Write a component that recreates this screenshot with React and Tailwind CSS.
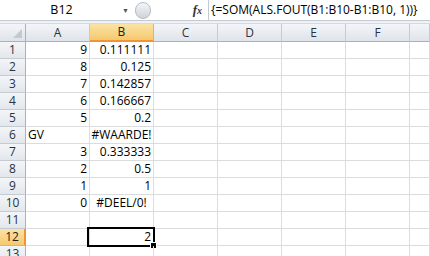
import React from "react";

const cols = ["A", "B", "C", "D", "E", "F", ""];

// row data: [A, B, aAlign, bAlign]
const rows = [
  ["9", "0.111111"],
  ["8", "0.125"],
  ["7", "0.142857"],
  ["6", "0.166667"],
  ["5", "0.2"],
  ["GV", "#WAARDE!", "left", "center"],
  ["3", "0.333333"],
  ["2", "0.5"],
  ["1", "1"],
  ["0", "#DEEL/0!", "right", "center"],
  ["", ""],
  ["", "2"],
  ["", ""],
];

const alignCls = {
  left: "justify-start pl-[2px]",
  right: "justify-end pr-[2px]",
  center: "justify-center",
};

function FormulaBar() {
  return (
    <div className="flex h-[21px] bg-white border-b border-[#c3c9d1]">
      <div className="relative flex w-[133px] items-center justify-center">
        <span className="mr-[10px] text-[12.5px] text-black">B12</span>
        <span className="absolute right-[4px] top-[7px] text-[7px] leading-none text-[#555]">▼</span>
      </div>
      <div className="flex w-[75px] items-center">
        <div className="ml-[2px] h-[17px] w-[16px] rounded-full border border-[#b6bcc4] bg-gradient-to-b from-[#f4f5f7] to-[#cfd4da]" />
        <span
          className="ml-auto mr-[6px] text-[13px] italic font-bold text-[#333]"
          style={{ fontFamily: '"Liberation Serif", serif' }}
        >
          f<span className="text-[10px]">x</span>
        </span>
      </div>
      <div className="flex flex-1 items-center border-l border-[#c3c9d1] pl-[2px] text-[12px] text-black whitespace-nowrap">
        {"{=SOM(ALS.FOUT(B1:B10-B1:B10, 1))}"}
      </div>
    </div>
  );
}

export default function App() {
  return (
    <div
      className="h-[256px] w-[430px] overflow-hidden bg-white"
      style={{ fontFamily: '"Open Sans", "Liberation Sans", sans-serif' }}
    >
      <FormulaBar />
      <div className="h-[3px] bg-[#eef1f5] border-b border-[#d5dae0]" />

      <div className="grid grid-cols-[26px_repeat(6,64px)_20px] auto-rows-[17px] grid-rows-[18px]">
        {/* corner */}
        <div className="relative border-r border-b border-[#a8b2bd] bg-gradient-to-b from-[#f3f5f8] to-[#dfe4ea]">
          <div
            className="absolute bottom-[3px] right-[3px] h-[9px] w-[9px] bg-[#c4c9cf]"
            style={{ clipPath: "polygon(100% 0, 100% 100%, 0 100%)" }}
          />
        </div>
        {cols.map((c, i) =>
          c === "B" ? (
            <div
              key={i}
              className="flex items-center justify-center border-r border-b-2 border-r-[#e5b45a] border-b-[#f29436] bg-gradient-to-b from-[#fbe3a6] to-[#f5c96d] text-[12px] text-[#222]"
            >
              {c}
            </div>
          ) : (
            <div
              key={i}
              className="flex items-center justify-center border-r border-b border-r-[#c5cbd2] border-b-[#a8b2bd] bg-gradient-to-b from-[#f3f5f8] to-[#dfe4ea] text-[12px] text-[#2b3340]"
            >
              {c}
            </div>
          )
        )}

        {rows.map((r, ri) => {
          const n = ri + 1;
          const sel = n === 12;
          return (
            <React.Fragment key={ri}>
              <div
                className={
                  sel
                    ? "flex items-center justify-center border-r-2 border-b border-r-[#f29436] border-b-[#e5b45a] bg-gradient-to-b from-[#fbe3a6] to-[#f5c96d] text-[12px] text-[#222]"
                    : "flex items-center justify-center border-r border-b border-r-[#a8b2bd] border-b-[#c5cbd2] bg-gradient-to-b from-[#f3f5f8] to-[#e3e7ec] text-[12px] text-[#2b3340]"
                }
              >
                {n}
              </div>
              <div
                className={`flex items-center border-r border-b border-[#dadcdd] text-[12px] text-black ${alignCls[r[2] || "right"]}`}
              >
                {r[0]}
              </div>
              <div
                className={`relative flex items-center border-r border-b border-[#dadcdd] text-[12px] text-black ${alignCls[r[3] || "right"]}`}
              >
                {r[1]}
                {sel && (
                  <>
                    <div className="absolute -left-[3px] -top-[2px] -right-[2px] -bottom-[2px] border-[2.5px] border-black" />
                    <div className="absolute -right-[4px] -bottom-[4px] h-[7px] w-[7px] border border-white bg-black" />
                  </>
                )}
              </div>
              {[0, 1, 2, 3, 4].map((k) => (
                <div key={k} className="border-r border-b border-[#dadcdd]" />
              ))}
            </React.Fragment>
          );
        })}
      </div>
    </div>
  );
}
